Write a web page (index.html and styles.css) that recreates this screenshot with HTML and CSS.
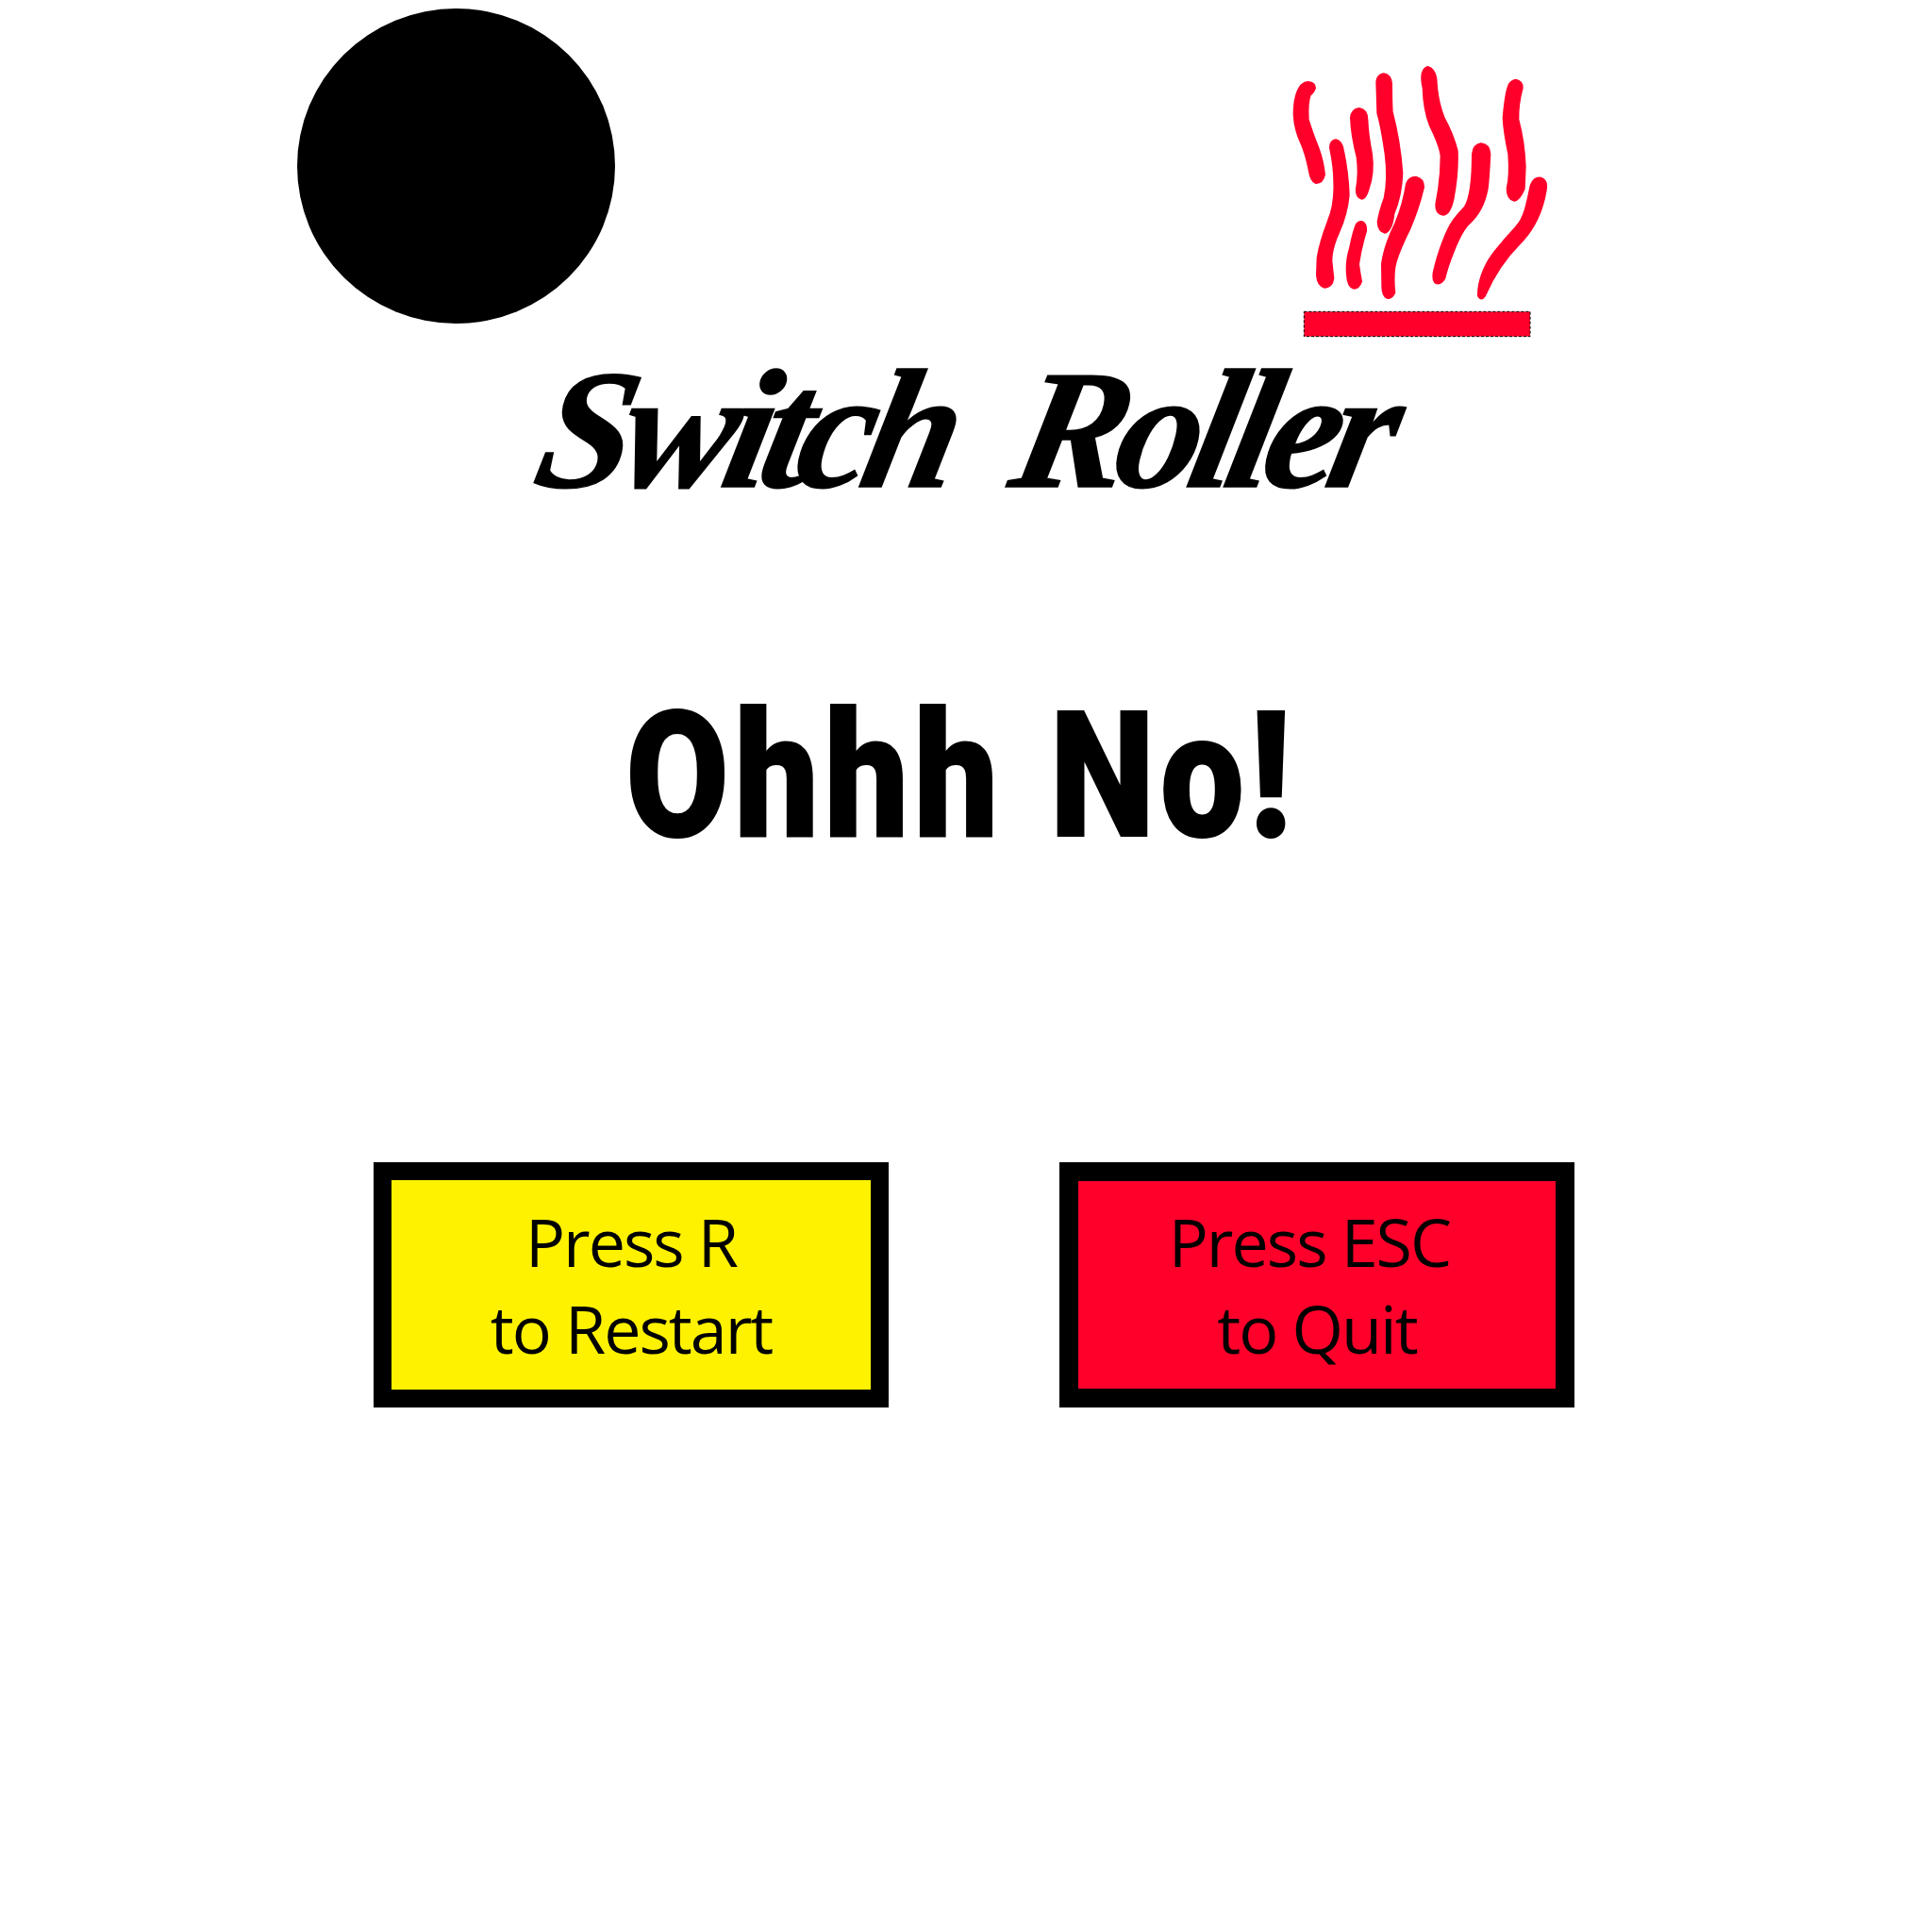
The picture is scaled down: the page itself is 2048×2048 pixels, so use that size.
FILE: index.html
```html
<!DOCTYPE html>
<html>
<head>
    <title>Switch Roller</title>
    <link rel="stylesheet" href="styles.css">
</head>
<body>
    <div class="screen">
        <div class="top-row">
            <div class="ball"></div>
            <svg class="heat" viewBox="0 0 990 960">
                <g class="waves">
                    <path d="M140 113Q160 115 160 130Q155 145 145 150Q135 175 138 230Q150 270 170 320Q185 360 190 405Q185 430 165 430Q150 425 145 390Q135 340 120 305Q100 265 97 215Q97 150 120 122Q130 113 140 113Z"/>
                    <path d="M228 297Q245 300 250 330Q265 400 267 470Q262 530 235 590Q212 640 212 680L218 735Q215 760 192 762Q172 755 170 725L172 670Q180 620 205 555Q228 500 225 430Q225 380 212 320Q212 300 228 297Z"/>
                    <path d="M302 197Q325 200 326 230Q328 280 340 340Q348 400 330 450Q322 480 310 480Q294 475 296 450Q305 400 298 350Q280 280 278 225Q280 200 302 197Z"/>
                    <path d="M310 557Q324 562 322 585Q305 640 298 690Q302 720 307 745Q300 765 285 765Q268 760 266 725Q262 680 275 640Q285 590 295 565Q300 557 310 557Z"/>
                    <path d="M380 87Q400 90 403 115Q403 170 405 205Q430 300 437 400Q435 470 410 530Q405 580 385 588Q365 585 364 555Q370 520 385 480Q398 420 388 340Q375 250 363 210L360 110Q362 90 380 87Z"/>
                    <path d="M482 415Q505 420 505 445Q490 510 460 580Q420 660 413 700Q408 740 413 780Q405 797 392 796Q378 790 378 760L377 690Q385 630 420 560Q445 500 455 435Q462 415 482 415Z"/>
                    <path d="M520 65Q540 70 545 100Q548 170 570 225Q600 280 612 330Q615 400 600 480Q590 530 570 531Q548 528 549 500Q565 420 565 345Q560 310 530 250Q510 200 508 130Q495 75 520 65Z"/>
                    <path d="M690 309Q715 312 716 340Q712 420 708 450Q695 520 650 560Q625 585 600 650Q580 700 572 735Q560 755 545 747Q535 735 545 700Q560 640 585 585Q600 550 640 510Q665 470 665 340Q668 312 690 309Z"/>
                    <path d="M800 106Q820 110 819 130Q805 180 806 230Q825 300 828 380L825 450Q810 485 795 486Q775 480 775 450Q785 410 780 340Q765 270 763 225Q770 140 782 118Q790 107 800 106Z"/>
                    <path d="M850 440Q860 415 880 418Q900 425 894 455C885 510 865 570 810 625C770 665 735 710 700 790Q690 805 683 790C682 750 700 700 725 665C750 630 780 600 805 570C830 545 840 490 850 440Z"/>
                </g>
                <rect class="heat-base" x="127" y="841" width="719" height="79"/>
            </svg>
        </div>

        <h2 class="logo">Switch Roller</h2>
        <h1 class="headline">Ohhh No!</h1>

        <div class="actions">
            <div class="action action-restart">Press R<br>to Restart</div>
            <div class="action action-quit">Press ESC&nbsp;<br>to Quit</div>
        </div>
    </div>
</body>
</html>
```

FILE: styles.css
```css
body {
    margin: 0;
    background: #fff;
    color: #000;
}

.screen {
    width: 2048px;
    height: 2048px;
    overflow: hidden;
}

.top-row {
    display: flex;
    align-items: flex-start;
    height: 370px;
    padding: 9px 0 0 315px;
    box-sizing: border-box;
}

.ball {
    width: 337px;
    height: 334px;
    border-radius: 50%;
    background: #000;
}

.heat {
    width: 330px;
    height: 320px;
    margin: 41px 0 0 688px;
}

.waves path {
    fill: #ff002b;
    stroke: #ff002b;
    stroke-width: 10;
    stroke-linejoin: round;
}

.heat-base {
    fill: #ff002b;
    stroke: #000;
    stroke-width: 3;
    stroke-dasharray: 9 6;
}

.logo {
    height: 200px;
    margin: 0;
    font: italic 700 180px/172px "Liberation Serif", serif;
    letter-spacing: -11px;
    word-spacing: 36px;
    -webkit-text-stroke: 1.5px #000;
    text-align: center;
    transform: translateX(-3px) skewX(-12deg);
}

.headline {
    margin: 162px 0 0;
    font: 900 186px/180px Roboto, sans-serif;
    letter-spacing: 7px;
    word-spacing: 4px;
    -webkit-text-stroke: 2px #000;
    text-align: center;
    transform: translateX(-5px) scaleX(.85);
}

.actions {
    display: flex;
    gap: 181px;
    margin: 320px 0 0 396px;
}

.action {
    display: flex;
    width: 546px;
    height: 260px;
    box-sizing: border-box;
    align-items: center;
    justify-content: center;
    border: 19px solid #000;
    font: 400 70px/92px "Open Sans", sans-serif;
    letter-spacing: -2px;
    text-align: center;
}

.action-restart {
    background: #fff200;
}

.action-quit {
    border-width: 20px;
    background: #ff002b;
}
```
